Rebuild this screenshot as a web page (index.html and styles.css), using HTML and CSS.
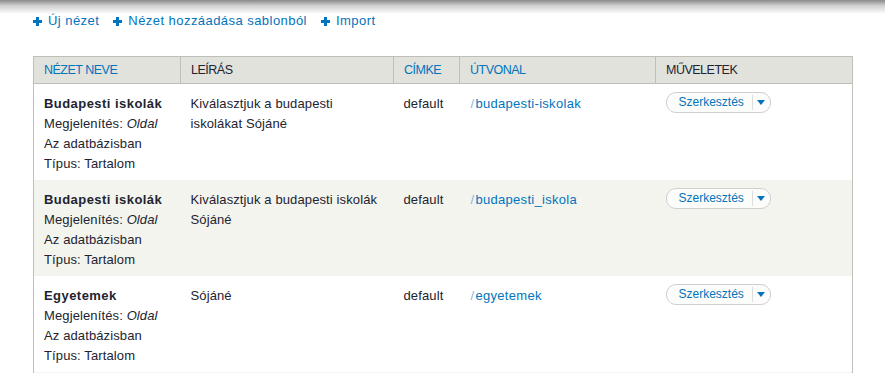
FILE: index.html
```html
<!DOCTYPE html>
<html>
    <head>
        <meta http-equiv="Content-Type" content="text/html;charset=UTF-8">
        <title>Nézetek</title>
        <link rel="stylesheet" href="styles.css">
    </head>
    <body>
        <div class="shade"></div>

        <ul class="action-links">
            <li><a href="#"><span class="plus"></span>Új nézet</a></li>
            <li><a href="#"><span class="plus"></span>Nézet hozzáadása sablonból</a></li>
            <li><a href="#"><span class="plus"></span>Import</a></li>
        </ul>

        <table class="views-list">
            <thead>
                <tr>
                    <th class="c-name sort">Nézet neve</th>
                    <th class="c-desc">Leírás</th>
                    <th class="c-tag sort">Címke</th>
                    <th class="c-path sort">Útvonal</th>
                    <th class="c-ops">Műveletek</th>
                </tr>
            </thead>
            <tbody>
                <tr>
                    <td>
                        <strong>Budapesti iskolák</strong><br>
                        Megjelenítés: <em>Oldal</em><br>
                        Az adatbázisban<br>
                        Típus: Tartalom
                    </td>
                    <td>Kiválasztjuk a budapesti iskolákat Sójáné</td>
                    <td>default</td>
                    <td class="path"><a href="#"><span class="slash">/</span>budapesti-iskolak</a></td>
                    <td><span class="dropbutton"><a href="#">Szerkesztés</a><span class="toggle"></span></span></td>
                </tr>
                <tr class="even">
                    <td>
                        <strong>Budapesti iskolák</strong><br>
                        Megjelenítés: <em>Oldal</em><br>
                        Az adatbázisban<br>
                        Típus: Tartalom
                    </td>
                    <td>Kiválasztjuk a budapesti iskolák Sójáné</td>
                    <td>default</td>
                    <td class="path"><a href="#"><span class="slash">/</span>budapesti_iskola</a></td>
                    <td><span class="dropbutton"><a href="#">Szerkesztés</a><span class="toggle"></span></span></td>
                </tr>
                <tr>
                    <td>
                        <strong>Egyetemek</strong><br>
                        Megjelenítés: <em>Oldal</em><br>
                        Az adatbázisban<br>
                        Típus: Tartalom
                    </td>
                    <td>Sójáné</td>
                    <td>default</td>
                    <td class="path"><a href="#"><span class="slash">/</span>egyetemek</a></td>
                    <td><span class="dropbutton"><a href="#">Szerkesztés</a><span class="toggle"></span></span></td>
                </tr>
                <tr class="even">
                    <td colspan="5"></td>
                </tr>
            </tbody>
        </table>
    </body>
</html>
```

FILE: styles.css
```css
body {
    margin: 0;
    background: #fff;
    color: #222330;
    font-family: "Liberation Sans", Arial, sans-serif;
    font-size: 13px;
    overflow: hidden;
}
a {
    color: #0074bd;
    text-decoration: none;
}
.shade {
    height: 14px;
    background: linear-gradient(#8a8a8a, #cfcfcf 40%, #fff);
}
.action-links {
    list-style: none;
    margin: 0;
    padding: 0 0 0 33px;
    display: flex;
    gap: 14px;
    height: 42px;
    line-height: 14px;
    letter-spacing: 0.45px;
}
.action-links a {
    display: flex;
    align-items: center;
    gap: 6px;
}
.plus {
    width: 9px;
    height: 9px;
    background:
        linear-gradient(#0074bd, #0074bd) center / 9px 3px no-repeat,
        linear-gradient(#0074bd, #0074bd) center / 3px 9px no-repeat;
}
.views-list {
    margin-left: 33px;
    width: 820px;
    border-collapse: collapse;
    border-left: 1px solid #bfbfba;
    border-right: 1px solid #bfbfba;
}
.views-list th {
    background: #e1e2dc;
    border: 1px solid #bfbfba;
    text-align: left;
    text-transform: uppercase;
    font-weight: normal;
    font-size: 12.5px;
    letter-spacing: -0.5px;
    padding: 0 10px;
    height: 26px;
    color: #222330;
}
.views-list th.sort {
    color: #0074bd;
}
.c-name { width: 126px; }
.c-desc { width: 192px; }
.c-tag { width: 45px; }
.c-path { width: 175px; }
.views-list td {
    vertical-align: top;
    padding: 10px 10px 6px;
    line-height: 20px;
    height: 80px;
    letter-spacing: 0.12px;
}
.views-list td strong {
    letter-spacing: 0.45px;
}
.views-list td.path {
    padding-left: 11px;
    letter-spacing: 0.3px;
}
.slash {
    color: #7fb9de;
    margin-right: 1px;
}
.views-list tr.even td {
    background: #f3f4ee;
}
.dropbutton {
    display: inline-flex;
    align-items: center;
    height: 19px;
    border: 1px solid #cfcfcf;
    border-radius: 10px;
    background: #fcfcfa;
    font-size: 12px;
    line-height: 19px;
    vertical-align: top;
    margin-top: -2px;
    letter-spacing: 0;
}
.dropbutton a {
    padding: 0 8px 0 12px;
    border-right: 1px solid #ddd;
    line-height: 15px;
}
.dropbutton .toggle {
    width: 17px;
    height: 19px;
    position: relative;
}
.dropbutton .toggle::after {
    content: "";
    position: absolute;
    left: 4px;
    top: 7px;
    border-left: 4px solid transparent;
    border-right: 4px solid transparent;
    border-top: 5px solid #0074bd;
}
```
